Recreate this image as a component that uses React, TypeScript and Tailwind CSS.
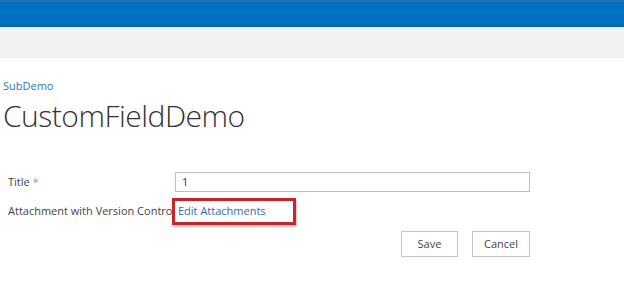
import React from 'react';

const font = { fontFamily: '"Open Sans", "Noto Sans", sans-serif' };

export default function App() {
  return (
    <div className="w-[624px] h-[285px] bg-white overflow-hidden" style={font}>
      {/* Suite bar */}
      <div className="h-[27px] bg-[#0071c2] border-t-2 border-t-[#2a6fb0] border-b-2 border-b-[#1b5d9f]" />
      <div className="h-[2px] bg-[#e3f4f8]" />
      {/* Ribbon */}
      <div className="h-[29px] bg-[#f2f2f2] border-b border-[#ebebeb]" />

      {/* Page title area */}
      <div className="pl-[3px] pt-[21px]">
        <a className="block text-[11px] leading-[14px] text-[#2a78b6]">SubDemo</a>
        <h1 className="mt-[5px] text-[30px] leading-[36px] font-light text-[#333] tracking-[-0.5px]">
          CustomFieldDemo
        </h1>
      </div>

      {/* Form */}
      <div className="mt-[38px] pl-[8px]">
        <div className="flex items-center h-[20px]">
          <div className="w-[167px] text-[11px] text-[#444]">
            Title <span className="text-[#7f9fc0]">*</span>
          </div>
          <div className="w-[355px] h-[20px] border border-[#bfbfbf] flex items-center px-[6px] text-[11px] text-[#333]">
            1
          </div>
        </div>

        <div className="flex items-center mt-[6px] h-[27px]">
          <div className="w-[164px] text-[11px] text-[#444] whitespace-nowrap overflow-hidden">
            Attachment with Version Control
          </div>
          <div className="w-[124px] h-[27px] border-[3px] border-[#c3262c] flex items-center pl-[3px] shadow-[1px_2px_2px_rgba(0,0,0,0.25)]">
            <a className="text-[11px] text-[#2a6fb0] whitespace-nowrap">Edit Attachments</a>
          </div>
        </div>

        <div className="flex justify-end gap-[14px] w-[522px] mt-[6px]">
          <button className="w-[57px] h-[26px] border border-[#c6c6c6] bg-white text-[11px] text-[#444]">
            Save
          </button>
          <button className="w-[58px] h-[26px] border border-[#c6c6c6] bg-white text-[11px] text-[#444]">
            Cancel
          </button>
        </div>
      </div>
    </div>
  );
}
